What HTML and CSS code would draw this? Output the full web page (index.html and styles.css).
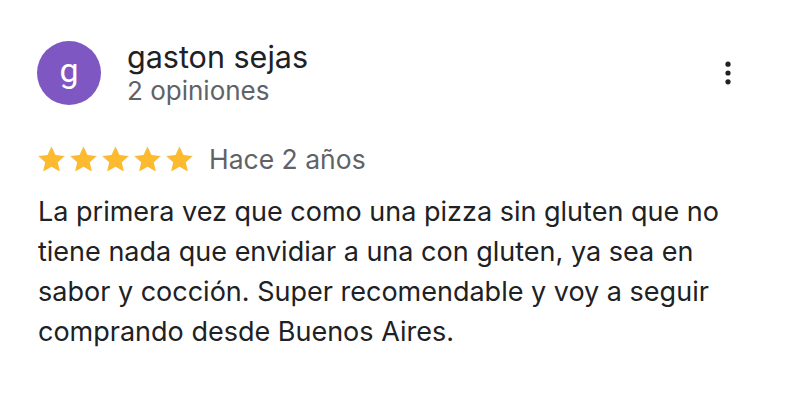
FILE: index.html
```html
<!DOCTYPE html>
<html lang="es">
<head>
<meta charset="utf-8">
<link rel="stylesheet" href="styles.css">
</head>
<body>
<div class="review">
  <div class="header">
    <div class="avatar">g</div>
    <div class="author">
      <div class="name">gaston sejas</div>
      <div class="count">2 opiniones</div>
    </div>
    <button class="more" aria-label="Más opciones">
      <svg width="6" height="24" viewBox="0 0 6 24"><circle cx="3" cy="3.2" r="2.6"/><circle cx="3" cy="12" r="2.6"/><circle cx="3" cy="20.8" r="2.6"/></svg>
    </button>
  </div>
  <div class="meta">
    <div class="stars">
      <svg viewBox="0 0 24 24"><path d="M12 1.2l3.3 7.1 7.7.8-5.8 5.2 1.7 7.6L12 18l-6.9 3.9 1.7-7.6L1 9.1l7.7-.8z"/></svg>
      <svg viewBox="0 0 24 24"><path d="M12 1.2l3.3 7.1 7.7.8-5.8 5.2 1.7 7.6L12 18l-6.9 3.9 1.7-7.6L1 9.1l7.7-.8z"/></svg>
      <svg viewBox="0 0 24 24"><path d="M12 1.2l3.3 7.1 7.7.8-5.8 5.2 1.7 7.6L12 18l-6.9 3.9 1.7-7.6L1 9.1l7.7-.8z"/></svg>
      <svg viewBox="0 0 24 24"><path d="M12 1.2l3.3 7.1 7.7.8-5.8 5.2 1.7 7.6L12 18l-6.9 3.9 1.7-7.6L1 9.1l7.7-.8z"/></svg>
      <svg viewBox="0 0 24 24"><path d="M12 1.2l3.3 7.1 7.7.8-5.8 5.2 1.7 7.6L12 18l-6.9 3.9 1.7-7.6L1 9.1l7.7-.8z"/></svg>
    </div>
    <span class="date">Hace 2 años</span>
  </div>
  <p class="text">La primera vez que como una pizza sin gluten que no tiene nada que envidiar a una con gluten, ya sea en sabor y cocción. Super recomendable y voy a seguir comprando desde Buenos Aires.</p>
</div>
</body>
</html>
```
FILE: styles.css
```css
html, body {
  margin: 0;
  background: #fff;
}
body {
  font-family: Inter, Roboto, sans-serif;
  color: #202124;
}
.review {
  padding: 39px 0 0 37px;
  width: 720px;
}
.header {
  display: flex;
  align-items: center;
}
.avatar {
  width: 64px;
  height: 64px;
  border-radius: 50%;
  background: #7e57c2;
  color: #fff;
  font-family: Roboto, sans-serif;
  font-size: 34px;
  display: flex;
  align-items: center;
  justify-content: center;
  line-height: 1;
  padding-bottom: 6px;
  box-sizing: border-box;
}
.author {
  margin-left: 26px;
  flex: 1;
}
.name {
  font-size: 30.5px;
  line-height: 36px;
  color: #202124;
}
.count {
  font-size: 26px;
  line-height: 32px;
  color: #5f6368;
}
.more {
  border: 0;
  background: none;
  padding: 0;
  margin-right: 26px;
  fill: #202124;
  display: flex;
}
.meta {
  display: flex;
  align-items: center;
  margin-top: 36px;
}
.stars {
  display: flex;
  gap: 3px;
}
.stars svg {
  width: 29px;
  height: 29px;
  fill: #fcbb2e;
}
.date {
  margin-left: 15px;
  font-size: 26.5px;
  color: #5f6368;
}
.text {
  margin: 17px 0 0 1px;
  font-size: 27px;
  line-height: 40px;
  color: #202124;
}
```
